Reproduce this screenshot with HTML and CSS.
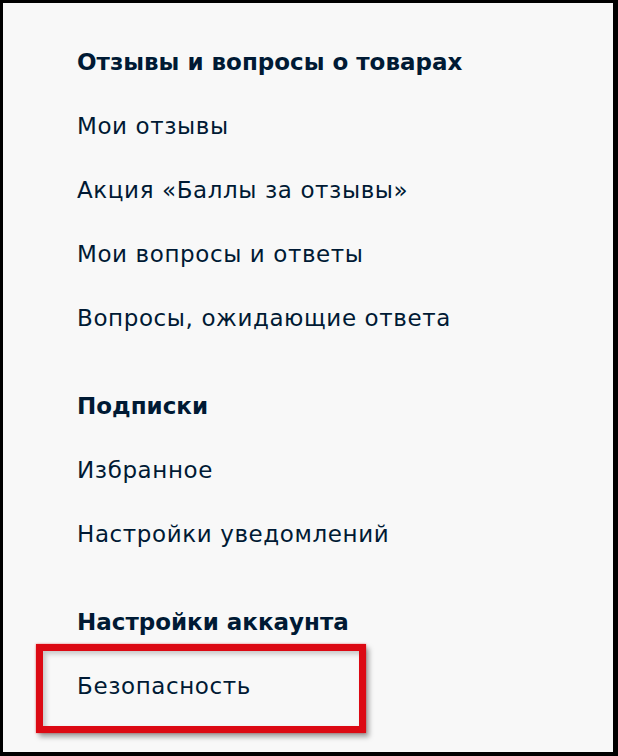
FILE: index.html
```html
<!DOCTYPE html>
<html lang="ru">
<head>
    <meta charset="UTF-8">
    <meta name="viewport" content="width=device-width, initial-scale=1.0">
    <title>Личный кабинет</title>
    <link rel="stylesheet" href="styles.css">
</head>
<body>
    <div class="frame">
        <nav class="menu">
            <div class="group">
                <h2 class="group-title">Отзывы и вопросы о товарах</h2>
                <a class="menu-link" href="#">Мои отзывы</a>
                <a class="menu-link" href="#">Акция «Баллы за отзывы»</a>
                <a class="menu-link" href="#">Мои вопросы и ответы</a>
                <a class="menu-link" href="#">Вопросы, ожидающие ответа</a>
            </div>

            <div class="group">
                <h2 class="group-title">Подписки</h2>
                <a class="menu-link" href="#">Избранное</a>
                <a class="menu-link" href="#">Настройки уведомлений</a>
            </div>

            <div class="group">
                <h2 class="group-title">Настройки аккаунта</h2>
                <a class="menu-link marked" href="#">Безопасность</a>
            </div>
        </nav>
    </div>
</body>
</html>
```

FILE: styles.css
```css
* {
    margin: 0;
    padding: 0;
    box-sizing: border-box;
}

body {
    font-family: 'DejaVu Sans', 'Open Sans', sans-serif;
    background: #000;
}

.frame {
    width: 618px;
    height: 756px;
    border-style: solid;
    border-color: #000;
    border-width: 3px 5px 4px 3px;
    background: #f8f8f8;
    padding: 27px 0 0 74px;
}

.menu {
    display: flex;
    flex-direction: column;
    gap: 24px;
    color: #001a34;
}

.group {
    display: flex;
    flex-direction: column;
}

.group-title,
.menu-link {
    display: block;
    height: 64px;
    line-height: 64px;
    font-size: 23px;
    white-space: nowrap;
}

.group-title {
    font-weight: 700;
}

.menu-link {
    font-weight: 400;
    letter-spacing: 0.6px;
    color: inherit;
    text-decoration: none;
}

/* red frame drawn round the selected link */
.marked {
    position: relative;
    align-self: flex-start;
}

.marked::after {
    content: "";
    position: absolute;
    left: -41px;
    top: -10px;
    width: 316px;
    height: 75px;
    border: 7px solid #dc0913;
    box-shadow: 3px 4px 5px rgba(0, 0, 0, 0.35),
                inset 3px 3px 5px rgba(0, 0, 0, 0.2),
                0 0 2px rgba(230, 40, 40, 0.6);
}
```
